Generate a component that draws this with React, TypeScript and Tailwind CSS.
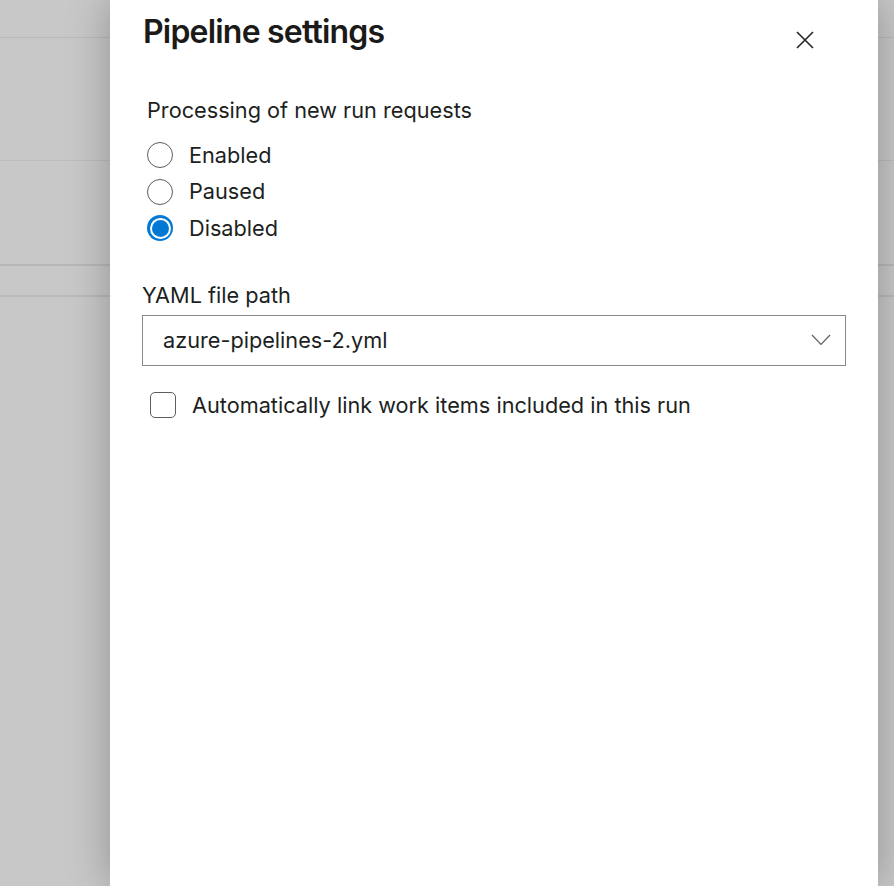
import React from "react";

function Radio({ label, checked }: { label: string; checked?: boolean }) {
  return (
    <div className="flex items-center h-[36.5px]">
      {checked ? (
        <span className="w-[26px] h-[26px] rounded-full bg-[#0078d4] flex items-center justify-center">
          <span className="w-[21px] h-[21px] rounded-full bg-white flex items-center justify-center">
            <span className="w-[17px] h-[17px] rounded-full bg-[#0078d4]" />
          </span>
        </span>
      ) : (
        <span className="w-[26px] h-[26px] rounded-full border border-[#605e5c] bg-white" />
      )}
      <span className="ml-[16px] text-[21.7px] text-[#201f1e]">{label}</span>
    </div>
  );
}

export default function App() {
  return (
    <div
      className="relative w-[894px] h-[886px] overflow-hidden bg-[#c8c8c8]"
      style={{ fontFamily: "Inter, 'Noto Sans', sans-serif" }}
    >
      <div className="flex flex-col">
        <div className="h-[38px] border-b border-[#bababa]" />
        <div className="h-[123px] border-b border-[#bcbcbc]" />
        <div className="h-[105px] border-b-2 border-[#b8b8b8]" />
        <div className="h-[31px] border-b-2 border-[#bababa]" />
      </div>

      <div className="absolute top-0 bottom-0 left-[110px] w-[768px] bg-white shadow-[0_0_40px_rgba(0,0,0,0.28)]">
        <div className="flex items-start justify-between pl-[33px] pr-[64px]">
          <h1 className="mt-[13px] text-[32px] leading-[38px] font-semibold tracking-[-0.8px] text-[#1b1a19]">
            Pipeline settings
          </h1>
          <svg className="mt-[31px]" width="18" height="18" viewBox="0 0 18 18">
            <path d="M1 1 L17 17 M17 1 L1 17" stroke="#252423" strokeWidth="1.6" fill="none" />
          </svg>
        </div>

        <div className="pl-[37px] mt-[46px]">
          <div className="text-[21.7px] leading-[26px] text-[#201f1e]">Processing of new run requests</div>
          <div className="mt-[14px] flex flex-col">
            <Radio label="Enabled" />
            <Radio label="Paused" />
            <Radio label="Disabled" checked />
          </div>
        </div>

        <div className="pl-[32px] pr-[32px] mt-[35px]">
          <div className="text-[21.7px] leading-[26px] text-[#201f1e]">YAML file path</div>
          <div className="mt-[7px] h-[51px] border border-[#8a8886] flex items-center justify-between pl-[20px] pr-[14px]">
            <span className="text-[21.7px] text-[#201f1e]">azure-pipelines-2.yml</span>
            <svg width="20" height="12" viewBox="0 0 20 12">
              <path d="M1 1 L10 10.5 L19 1" stroke="#605e5c" strokeWidth="1.2" fill="none" />
            </svg>
          </div>
        </div>

        <div className="pl-[40px] mt-[23px] flex items-center">
          <span className="w-[26px] h-[26px] rounded-[5px] border border-[#605e5c] bg-white" />
          <span className="ml-[16px] text-[21.7px] text-[#201f1e]">
            Automatically link work items included in this run
          </span>
        </div>
      </div>
    </div>
  );
}
